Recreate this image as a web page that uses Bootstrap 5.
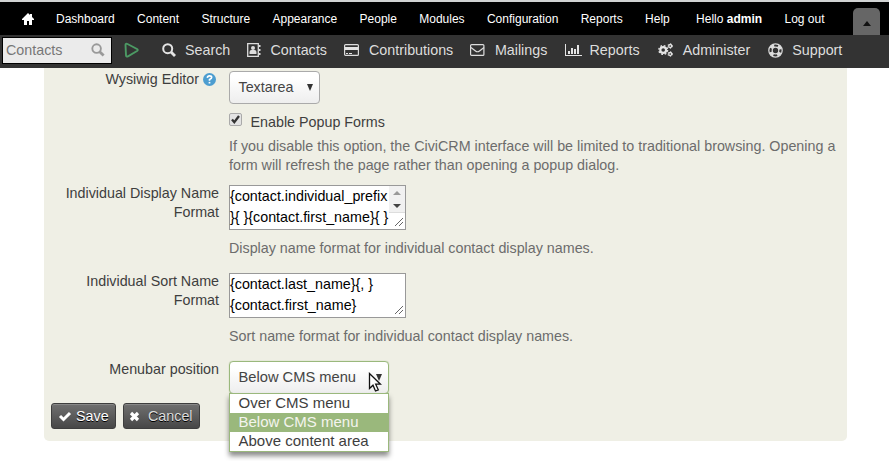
<!DOCTYPE html>
<html lang="en">
<head>
<meta charset="utf-8">
<title>Display Preferences</title>
<link href="https://cdn.jsdelivr.net/npm/bootstrap@5.3.0/dist/css/bootstrap.min.css" rel="stylesheet">
<style>
body{font-family:"Liberation Sans",Arial,sans-serif;font-size:14.3px;line-height:19px;color:#3e3e3e;height:461px;overflow:hidden;background:#fff}
svg{display:block;flex:none}
.cms-bar{height:35px;background:#000;border-top:2px solid #d0d2d2;font-size:12px;padding:2px 0 0 22px}
.cms-bar a{color:#fff;text-decoration:none;margin-right:22.35px;white-space:nowrap}
.cms-bar a:first-child{margin-right:22px;padding-bottom:2px}
.drawer{width:27px;height:27px;background:#666;border-radius:5px 5px 0 0;margin:0 9px 0 auto}
.crm-bar{height:33px;background:#333;padding:0 0 3px 2px}
.crm-bar a{color:#ddd;text-decoration:none;margin-right:17.15px;white-space:nowrap}
.crm-bar .gear-link{margin-left:1px;margin-right:17.5px}
.ic{width:23px;flex:none}.ic25{width:25px}.ic24{width:24.5px}
.quick{width:110px;height:27px;background:#ebebeb;border:1px solid #000;color:#777;padding:0 6px 0 3px}
.panel{width:803px;height:373px;margin-left:44px;background:#efefe5;border-radius:0 0 5px 5px;padding-top:2px}
.lab{width:175px;text-align:right;flex:none;margin-right:10px}
.hint{margin:3px 3px 0 0}
.r1{height:114px}.r2{height:88px}.r3{height:43px}
.pick{height:33px;border:1px solid #aaa;border-radius:4px;background:linear-gradient(#fff 20%,#f6f6f6 60%,#eee);padding:0 6px 0 8.5px;margin-top:1px;color:#444}
.pick-a{width:91px}.pick-b{width:160px;border-color:#9ab87c;font-size:14.7px;box-shadow:0 0 1px #9ab87c}
.check{width:13px;height:13px;border:1px solid #aaa;border-radius:2px;background:#e3e3e3;margin:0 8.5px 5px 0}
.opt-row{height:19px;margin-top:8px;white-space:nowrap}
.opt-text{padding-top:2px}
.help-text{color:#6c6c6c;white-space:nowrap}
.popup-help{padding-top:6px}
.area{width:177px;height:45px;border:1px solid #999;background:#fff;color:#000;line-height:21px;margin:1px 0 9px;white-space:pre}
.grip{right:2px;bottom:3px}
.scroll{right:0;top:0;width:16px;height:27px;background:#f1f1f1;border-bottom:1px solid #ddd}
.choices{left:0;top:33px;width:160px;height:59px;border:1px solid #9ab87c;background:#fff;box-shadow:0 4px 5px rgba(0,0,0,.45);z-index:3;font-size:15px;line-height:17px}
.choices div{height:19px;padding-left:8.5px}
.choices .on{background:#9ab87c;color:#f4f4ee}
.pointer{left:139px;top:12px;z-index:4}
.crm-btn{width:65px;height:26px;border:1px solid #3e3e3e;border-radius:3px;background:linear-gradient(#707070,#474747);color:#fff;font-size:14.3px;text-shadow:0 1px 0 #000;line-height:24px;padding:0 6px;box-shadow:inset 0 1px 0 #888}
.btns{padding-left:7px;gap:7px}
.crm-btn.cancel{width:77px;color:#ddd;padding-left:5px}
</style>
<script src="https://cdn.jsdelivr.net/npm/bootstrap@5.3.0/dist/js/bootstrap.bundle.min.js"></script>
</head>
<body>
<nav class="cms-bar d-flex align-items-center">
<a href="#"><svg width="12" height="12" viewBox="0 0 12 12"><path fill="#fff" d="M6 0 0 6v1h2v5h3V8h2v4h3V7h2V6L10 4V1H8v1z"/></svg></a>
<a href="#">Dashboard</a><a href="#">Content</a><a href="#">Structure</a><a href="#">Appearance</a><a href="#">People</a><a href="#">Modules</a><a href="#">Configuration</a><a href="#">Reports</a><a href="#">Help</a>
<a href="#" class="ms-1">Hello <b>admin</b></a><a href="#" class="me-0">Log out</a>
<span class="drawer d-flex align-items-center justify-content-center align-self-end pt-1"><svg width="8" height="5"><path d="M0 5 4 0l4 5z" fill="#111"/></svg></span>
</nav>
<nav class="crm-bar d-flex align-items-center">
<div class="quick d-flex align-items-center justify-content-between">Contacts
<svg width="14" height="14" viewBox="0 0 15 15" fill="none" stroke="#999" stroke-width="2"><circle cx="6" cy="6" r="4.6"/><path d="m9 9 4.5 4.5" stroke-width="3"/></svg></div>
<span class="ps-2 ms-1"><svg width="26" height="16" viewBox="0 0 26 16"><path d="M1.500 3Q1.500 1 3.500 2L13 7q1.500 1 0 2l-9 5.300q-2 .7-2-1z" fill="none" stroke="#4c9a64" stroke-width="1.900"/></svg></span>
<span class="ms-2 ps-1"></span>
<a href="#" class="d-flex align-items-center"><span class="ic"><svg width="14" height="14" viewBox="0 0 14 14" fill="none" stroke="#e4e4e4" stroke-width="2"><circle cx="5.700" cy="5.700" r="4.500"/><path d="m9 9 4 4" stroke-width="2.800"/></svg></span>Search</a>
<a href="#" class="d-flex align-items-center"><span class="ic"><svg width="14" height="14" viewBox="0 0 14 14"><path d="M.7.7h10.600v12.600H.7z" fill="none" stroke="#ddd" stroke-width="1.300"/><circle cx="6" cy="5" r="2" fill="#ddd"/><path d="M2.500 11V9q0-2 2-2h3q2 0 2 2v2zM12 2h1.500v2H12zM12 6h1.500v2H12zM12 10h1.500v2H12z" fill="#ddd"/></svg></span>Contacts</a>
<a href="#" class="d-flex align-items-center"><span class="ic ic25"><svg width="15" height="12" viewBox="0 0 15 12"><rect x=".6" y=".6" width="13.800" height="10.800" rx="1" fill="none" stroke="#ddd" stroke-width="1.200"/><path d="M1 3h13v3H1zM2 9h2v1H2zM5 9h3v1H5z" fill="#e4e4e4"/></svg></span>Contributions</a>
<a href="#" class="d-flex align-items-center"><span class="ic ic24"><svg width="15" height="12" viewBox="0 0 15 12" fill="none" stroke="#ddd" stroke-width="1.200"><rect x=".6" y=".6" width="13.300" height="10.800" rx="1"/><path d="M1 3.500 5.500 7q2 1.500 4 0L14 3.500"/></svg></span>Mailings</a>
<a href="#" class="d-flex align-items-center"><span class="ic ic25"><svg width="17" height="12" viewBox="0 0 17 12"><path d="M0 0h1v11h16v1H0zM3 7h2v3H3zM6 4h2v6H6zM9 5h2v5H9zM12 1h2v9h-2z" fill="#e4e4e4"/></svg></span>Reports</a>
<a href="#" class="d-flex align-items-center gear-link"><span class="ic ic25"><svg width="15" height="14" viewBox="0 0 15 14" fill="none" stroke="#e4e4e4"><circle cx="5.200" cy="7" r="2.900" stroke-width="2.200"/><circle cx="5.200" cy="7" r="4.400" stroke-width="1.400" stroke-dasharray="1.730 1.726"/><circle cx="12.200" cy="3" r="1.500" stroke-width="1.300"/><circle cx="12.200" cy="3" r="2.400" stroke-width=".8" stroke-dasharray="1.200 1.310"/><circle cx="12.200" cy="11" r="1.500" stroke-width="1.300"/><circle cx="12.200" cy="11" r="2.400" stroke-width=".8" stroke-dasharray="1.200 1.310"/></svg></span>Administer</a>
<a href="#" class="d-flex align-items-center"><span class="ic ic24"><svg width="15" height="15" viewBox="0 0 15 15" fill="none" stroke="#ddd"><circle cx="7.500" cy="7.500" r="6.700" stroke-width="1.200"/><circle cx="7.500" cy="7.500" r="3.300" stroke-width="1.200"/><circle cx="7.500" cy="7.500" r="5" stroke-width="3" stroke-dasharray="3.930 3.924" stroke-dashoffset="-1.960"/></svg></span>Support</a>
</nav>
<main class="panel">
<div class="r1 d-flex">
<div class="lab d-flex justify-content-end"><span class="pe-1">Wysiwig Editor</span><svg class="hint" width="13" height="13" viewBox="0 0 12 12"><circle cx="6" cy="6" r="6" fill="#4c9dd0"/><path d="M4 4.500q.2-1.800 2-1.800 2 0 2 1.500Q8 5.200 6 6v1.200" fill="none" stroke="#fff" stroke-width="1.500"/><path d="M5.200 8.200h1.600v1.500H5.200z" fill="#fff"/></svg></div>
<div>
<div class="pick pick-a d-flex align-items-center justify-content-between">Textarea<svg width="6" height="7"><path d="M0 0h6L3 7z" fill="#333"/></svg></div>
<div class="opt-row d-flex align-items-center"><span class="check"><svg width="11" height="11" viewBox="0 0 11 11"><path d="m2 5.500 2.300 2.700L9 2" fill="none" stroke="#333" stroke-width="2.300"/></svg></span><span class="opt-text">Enable Popup Forms</span></div>
<div class="help-text popup-help">If you disable this option, the CiviCRM interface will be limited to traditional browsing. Opening a<br>form will refresh the page rather than opening a popup dialog.</div>
</div></div>
<div class="r2 d-flex"><div class="lab">Individual Display Name<br>Format</div><div>
<div class="area position-relative">{contact.individual_prefix
}{ }{contact.first_name}{ }<span class="scroll position-absolute"><svg width="16" height="27"><path d="M4 9l4-4 4 4z" fill="#999"/><path d="M4 18h8l-4 4z" fill="#444"/></svg></span><svg class="grip position-absolute" width="8" height="8"><path d="M0 8 8 0M4 8l4-4" stroke="#666"/></svg></div>
<div class="help-text">Display name format for individual contact display names.</div></div></div>
<div class="r2 d-flex"><div class="lab">Individual Sort Name<br>Format</div><div>
<div class="area position-relative">{contact.last_name}{, }
{contact.first_name}<svg class="grip position-absolute" width="8" height="8"><path d="M0 8 8 0M4 8l4-4" stroke="#666"/></svg></div>
<div class="help-text">Sort name format for individual contact display names.</div></div></div>
<div class="r3 d-flex"><div class="lab">Menubar position</div>
<div class="position-relative"><div class="pick pick-b d-flex align-items-center justify-content-between">Below CMS menu<svg width="6" height="7"><path d="M0 0h6L3 7z" fill="#333"/></svg></div>
<div class="choices position-absolute"><div>Over CMS menu</div><div class="on">Below CMS menu</div><div>Above content area</div></div>
<svg class="pointer position-absolute" width="14" height="22" viewBox="0 0 14 22"><path d="M1.500 1.500v15l3.500-3.300 2.500 5.800 2.800-1.200-2.600-5.600h4.800z" fill="#fff" stroke="#111" stroke-width="1.300"/></svg></div></div>
<div class="btns d-flex"><button class="crm-btn d-flex align-items-center"><svg class="me-1" width="14" height="11" viewBox="0 0 13 11"><path d="m1.500 5 3.500 3.500L11.500 2" fill="none" stroke="#fff" stroke-width="3"/></svg>Save</button><button class="crm-btn cancel d-flex align-items-center"><svg class="me-2" width="11" height="11" viewBox="0 0 11 11"><path d="m2 2 7 7M9 2 2 9" stroke="#fff" stroke-width="3.200"/></svg>Cancel</button></div>
</main>
</body>
</html>
